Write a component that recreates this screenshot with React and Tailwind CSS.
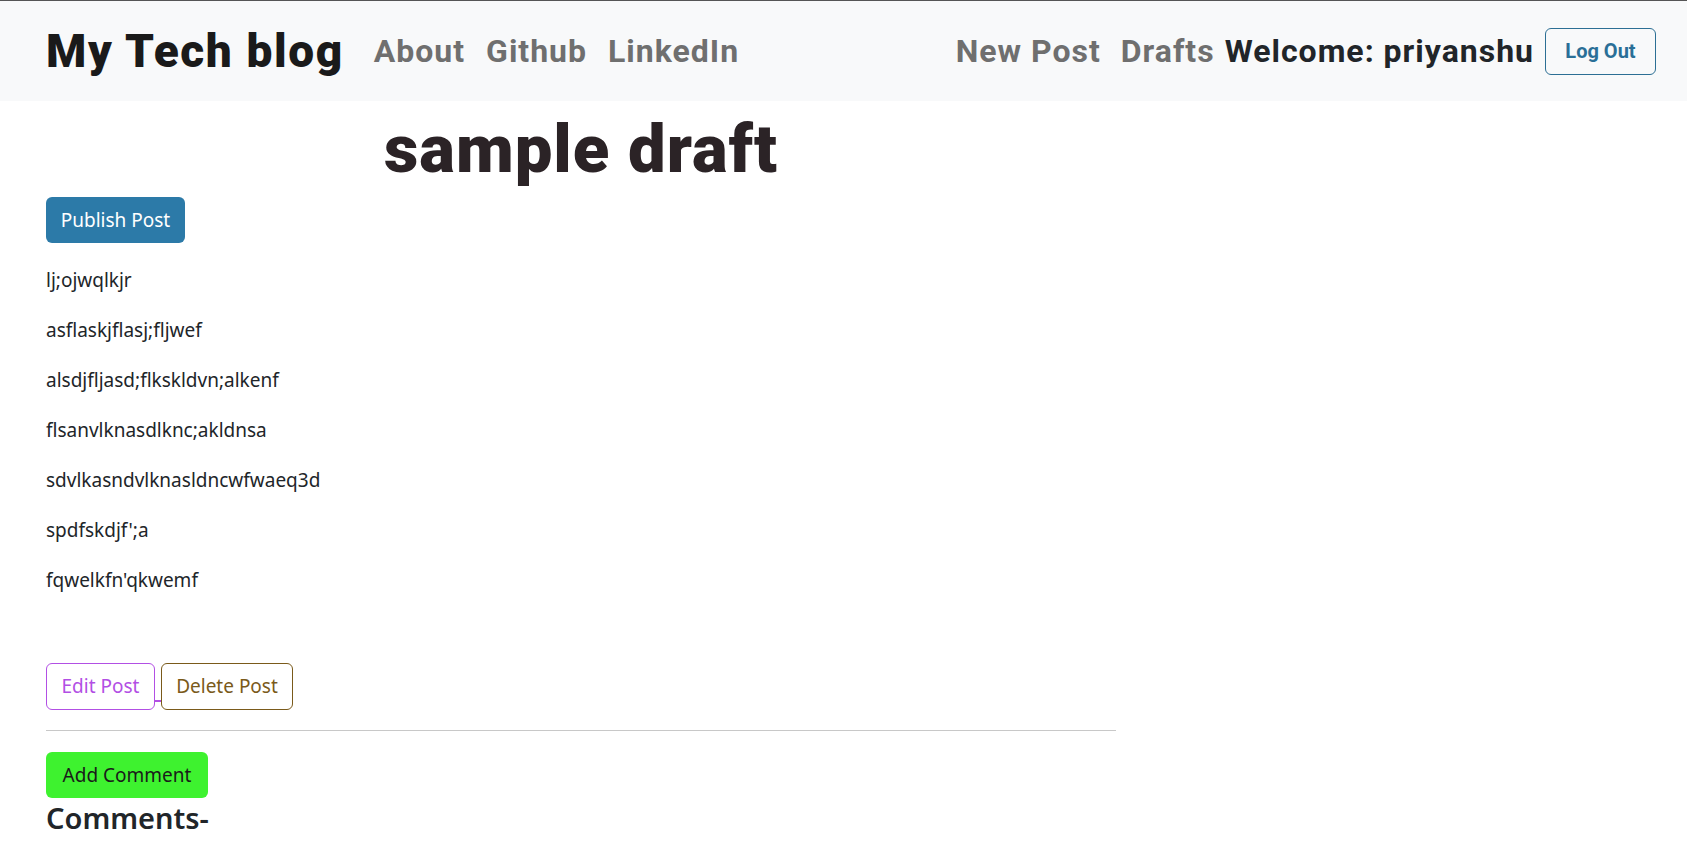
export default function App() {
  const body = { fontFamily: '"Noto Sans", "Open Sans", sans-serif' };
  const head = { fontFamily: 'Roboto, "Liberation Sans", sans-serif' };
  const paras = [
    "lj;ojwqlkjr",
    "asflaskjflasj;fljwef",
    "alsdjfljasd;flkskldvn;alkenf",
    "flsanvlknasdlknc;akldnsa",
    "sdvlkasndvlknasldncwfwaeq3d",
    "spdfskdjf';a",
    "fqwelkfn'qkwemf",
  ];
  return (
    <div className="min-h-screen bg-white text-[#212529]" style={body}>
      <nav className="flex h-[101px] items-center border-t border-[#555] bg-[#f8f9fa] pl-[46px] pr-[31px]" style={head}>
        <span className="text-[46px] font-black leading-none tracking-[1.6px] text-[#1a1a1a]">My Tech blog</span>
        <div className="ml-[30px] flex gap-[21px] text-[32px] font-bold tracking-[1px] text-[#6f6f6f]">
          <span>About</span>
          <span>Github</span>
          <span>LinkedIn</span>
        </div>
        <div className="ml-auto flex items-center text-[32px] font-bold tracking-[1px]">
          <span className="text-[#6f6f6f]">New Post</span>
          <span className="ml-[20px] text-[#6f6f6f]">Drafts</span>
          <span className="ml-[10px] text-[#212529]">Welcome: priyanshu</span>
          <button className="ml-[11px] h-[47px] w-[111px] rounded-[6px] border border-[#2c6f94] text-[20px] font-bold tracking-normal text-[#2a6f97]">Log Out</button>
        </div>
      </nav>
      <main className="ml-[46px] w-[1070px]">
        <h1 className="mt-[13px] text-center text-[67px] font-black leading-[70px] tracking-[1px] text-[#2b2326]" style={head}>sample draft</h1>
        <button className="mt-[13px] h-[46px] w-[139px] rounded-[6px] bg-[#2c7aa8] text-[19px] text-white">Publish Post</button>
        <div className="mt-[22px] flex flex-col gap-[20px] text-[19px] leading-[30px] text-[#212529]">
          {paras.map((p) => (
            <p key={p}>{p}</p>
          ))}
        </div>
        <div className="mt-[68px] flex items-end">
          <button className="h-[47px] w-[109px] rounded-[6px] border border-[#b24fe4] text-[19px] text-[#b24fe4]">Edit Post</button>
          <span className="mb-[8px] h-[2px] w-[6px] bg-[#b24fe4]"></span>
          <button className="h-[47px] w-[132px] rounded-[6px] border border-[#7a5a1a] text-[19px] text-[#7a5a1a]">Delete Post</button>
        </div>
        <hr className="mt-[20px] border-t border-[#c8c8c8]" />
        <button className="mt-[21px] h-[46px] w-[162px] rounded-[6px] bg-[#3ef22f] text-[19px] text-[#1a1a1a]">Add Comment</button>
        <h2 className="text-[29px] font-semibold leading-[40px] text-[#212529]">Comments-</h2>
      </main>
    </div>
  );
}
